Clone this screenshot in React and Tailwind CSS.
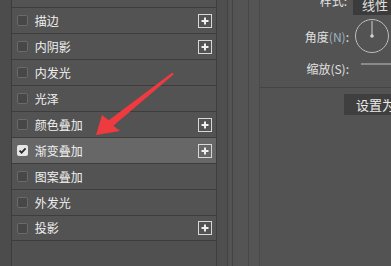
const rows = [
  { label: "描边", plus: true },
  { label: "内阴影", plus: true },
  { label: "内发光" },
  { label: "光泽" },
  { label: "颜色叠加", plus: true },
  { label: "渐变叠加", plus: true, checked: true },
  { label: "图案叠加" },
  { label: "外发光" },
  { label: "投影", plus: true },
];

const font = { fontFamily: '"Noto Sans CJK SC", "Noto Sans", sans-serif' };

const Checkbox = ({ checked }) =>
  checked ? (
    <div className="w-[11px] h-[11px] rounded-[2px] bg-[#e6e6e6] flex items-center justify-center">
      <svg width="9" height="9" viewBox="0 0 9 9">
        <path d="M1.5 4.6 L3.6 6.7 L7.6 2.4" fill="none" stroke="#2a2a2a" strokeWidth="1.8" />
      </svg>
    </div>
  ) : (
    <div className="w-[11px] h-[11px] rounded-[2px] bg-[#474747] border border-[#6a6a6a]" />
  );

const PlusBox = () => (
  <div className="w-[14px] h-[14px] border border-[#d8d8d8] flex items-center justify-center">
    <svg width="10" height="10" viewBox="0 0 10 10">
      <path d="M5 1.5 V8.5 M1.5 5 H8.5" stroke="#f0f0f0" strokeWidth="2" />
    </svg>
  </div>
);

export default function App() {
  return (
    <div
      className="relative w-[391px] h-[266px] overflow-hidden flex bg-[#535353] text-[#f0f0f0]"
      style={font}
    >
      {/* left strip */}
      <div className="w-[12px] h-full bg-[#4c4c4c] border-r border-[#3c3c3c]" />

      {/* effects list */}
      <div className="w-[210px] h-full flex flex-col bg-[#535353] border-r border-[#3e3e3e]">
        <div className="h-[7px]" />
        {rows.map((r, i) => (
          <div
            key={r.label}
            className={`h-[26px] flex items-center pl-[5px] pr-[4px] border-t border-[#3d3d3d] ${
              r.checked ? "bg-[#676767]" : ""
            } ${i === rows.length - 1 ? "border-b" : ""}`}
          >
            <Checkbox checked={r.checked} />
            <span className="ml-[7px] text-[12px] leading-none flex-1">{r.label}</span>
            {r.plus && <PlusBox />}
          </div>
        ))}
        <div className="flex-1 bg-[#505050]" />
      </div>

      {/* gutter lines */}
      <div className="w-[11px] h-full bg-[#4f4f4f] border-r border-[#424242]" />
      <div className="w-[5px] h-full bg-[#535353] border-r border-[#444444]" />
      <div className="w-[17px] h-full bg-[#545454] border-r border-[#474747]" />
      <div className="w-[11px] h-full bg-[#555555] border-r border-[#4a4a4a]" />

      {/* right panel */}
      <div className="flex-1 h-full flex flex-col">
        <div className="h-[88px] border-b border-[#444444] flex flex-col text-[12px] text-[#e0e0e0]">
          <div className="h-[15px] flex items-start">
            <span className="w-[89px] text-right pr-[2px] leading-none -mt-[5px]">样式:</span>
            <div className="flex-1 h-[15px] ml-[4px] bg-[#3b3b3b] pl-[9px] overflow-hidden">
              <div className="text-[13px] leading-none -mt-[2px] whitespace-nowrap">线性</div>
            </div>
          </div>
          <div className="h-[38px] flex items-center mt-[3px]">
            <span className="w-[91px] text-right pr-[2px] leading-none">
              角度<span className="text-[#9fb2c0]">(N)</span>:
            </span>
            <svg width="40" height="38" viewBox="0 0 40 38" className="shrink-0">
              <circle cx="21" cy="18" r="16.5" fill="none" stroke="#bdbdbd" strokeWidth="1" />
              <path d="M21 18 V3" stroke="#d0d0d0" strokeWidth="1" />
              <circle cx="21" cy="18" r="1.8" fill="#d0d0d0" />
            </svg>
          </div>
          <div className="h-[26px] flex items-center">
            <span className="w-[91px] text-right pr-[2px] leading-none">缩放(S):</span>
            <div className="self-start flex-1 h-[2px] bg-[#8a8a8a] ml-[10px] mt-[7px]" />
          </div>
        </div>
        <div className="flex justify-end mt-[6px]">
          <div className="w-[47px] h-[21px] bg-[#3f3f3f] overflow-hidden pl-[12px] pt-[4px]">
            <div className="text-[13px] leading-none whitespace-nowrap text-[#ececec]">设置为默认值</div>
          </div>
        </div>
      </div>

      {/* red arrow */}
      <svg className="absolute left-0 top-0 pointer-events-none" width="391" height="266">
        <polygon
          points="173.8,74.2 113.4,125.8 120,131 96,135 102,115 108.8,120.3 172.4,72.4"
          fill="#ef3a40"
        />
      </svg>
    </div>
  );
}
